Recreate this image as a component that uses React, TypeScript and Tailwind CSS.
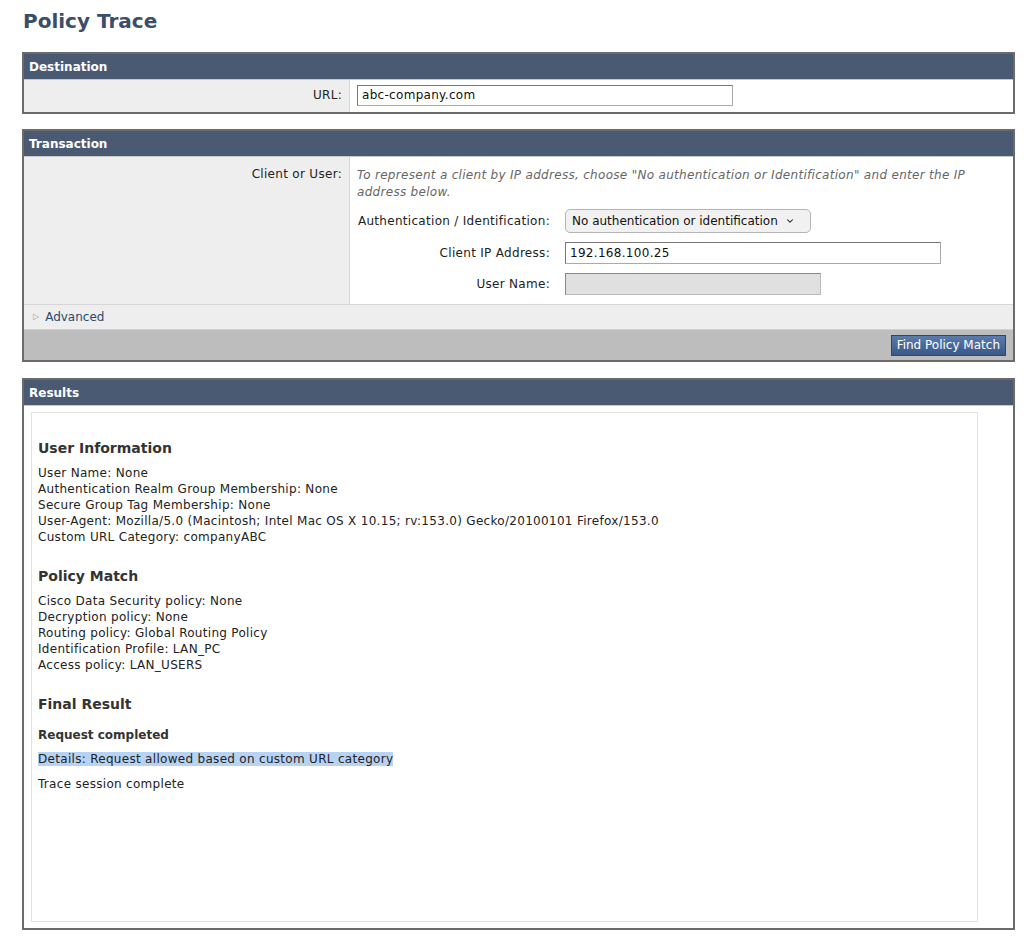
import { ChevronDown } from 'lucide-react';

const userInfo = [
  'User Name: None',
  'Authentication Realm Group Membership: None',
  'Secure Group Tag Membership: None',
  'User-Agent: Mozilla/5.0 (Macintosh; Intel Mac OS X 10.15; rv:153.0) Gecko/20100101 Firefox/153.0',
  'Custom URL Category: companyABC',
];

const policyMatch = [
  'Cisco Data Security policy: None',
  'Decryption policy: None',
  'Routing policy: Global Routing Policy',
  'Identification Profile: LAN_PC',
  'Access policy: LAN_USERS',
];

function PanelHeader({ title }: { title: string }) {
  return (
    <div className="h-[26px] bg-[#4a5a72] border-b border-[#c8c8c8] px-[5px] flex items-center text-white text-[12px] font-bold tracking-normal">
      {title}
    </div>
  );
}

export default function App() {
  return (
    <div className="min-h-[941px] bg-white font-['DejaVu_Sans',Verdana,sans-serif] text-[12px] tracking-[0.3px] text-[#222] px-[22px] pt-[9px]">
      <h1 className="text-[20px] font-bold text-[#3c4d68] leading-[24px] ml-[1px] tracking-normal">Policy Trace</h1>

      {/* Destination */}
      <div className="mt-[19px] w-[993px] border-2 border-[#6b6b6b]">
        <PanelHeader title="Destination" />
        <div className="flex h-[32px]">
          <div className="w-[326px] bg-[#eeeeee] border-r border-[#d6d6d6] flex justify-end pr-[7px] pt-[6px]">URL:</div>
          <div className="flex-1 bg-white pl-[7px] pt-[5px]">
            <div className="w-[376px] h-[21px] border border-[#aaa] border-t-[#777] border-l-[#777] pl-[4px] leading-[19px] text-[#111]">
              abc-company.com
            </div>
          </div>
        </div>
      </div>

      {/* Transaction */}
      <div className="mt-[15px] w-[993px] border-2 border-[#6b6b6b]">
        <PanelHeader title="Transaction" />
        <div className="flex h-[148px] border-b border-[#d6d6d6]">
          <div className="w-[326px] bg-[#eeeeee] border-r border-[#d6d6d6] flex justify-end pr-[7px] pt-[8px]">Client or User:</div>
          <div className="flex-1 bg-white pl-[7px] pt-[10px]">
            <p className="italic text-[#666] leading-[17px] w-[630px]">
              To represent a client by IP address, choose "No authentication or Identification" and enter the IP address below.
            </p>
            <div className="mt-[8px] grid grid-cols-[193px_1fr] gap-x-[15px] gap-y-[9px] items-center">
              <div className="text-right">Authentication / Identification:</div>
              <div>
                <div className="w-[246px] h-[24px] rounded-[5px] border border-[#b5b5b5] bg-[#f1f1f1] flex items-center px-[6px] text-[#111] tracking-normal">
                  <span>No authentication or identification</span>
                  <ChevronDown className="ml-[7px] w-[10px] h-[10px]" strokeWidth={2.5} />
                </div>
              </div>
              <div className="text-right">Client IP Address:</div>
              <div className="w-[376px] h-[22px] border border-[#aaa] border-t-[#777] border-l-[#777] pl-[4px] leading-[20px] text-[#111]">
                192.168.100.25
              </div>
              <div className="text-right">User Name:</div>
              <div className="w-[256px] h-[22px] border border-[#bbb] border-t-[#888] border-l-[#888] bg-[#e0e0e0]" />
            </div>
          </div>
        </div>
        <div className="h-[25px] bg-[#eeeeee] flex items-center pl-[9px] gap-[6px] text-[#2b4a6b] tracking-normal border-b border-[#d0d0d0]">
          <span className="text-[8px] text-[#999]">▷</span>
          <span>Advanced</span>
        </div>
        <div className="h-[30px] bg-[#bdbdbd] flex items-center justify-end pr-[7px]">
          <button className="h-[21px] px-[5px] bg-gradient-to-b from-[#5a7bab] to-[#3a5888] border border-[#2e4670] text-white text-[12px] leading-[19px] tracking-normal">
            Find Policy Match
          </button>
        </div>
      </div>

      {/* Results */}
      <div className="mt-[16px] w-[993px] border-2 border-[#6b6b6b]">
        <PanelHeader title="Results" />
        <div className="bg-white px-[7px] pt-[6px] pb-[6px]">
          <div className="w-[947px] h-[510px] border border-[#e2e2e2] pl-[6px] pt-[26px]">
            <h2 className="text-[14px] font-bold text-[#333] leading-[18px] tracking-normal">User Information</h2>
            <div className="mt-[8px] leading-[16px]">
              {userInfo.map((line) => (
                <div key={line}>{line}</div>
              ))}
            </div>
            <h2 className="mt-[22px] text-[14px] font-bold text-[#333] leading-[18px] tracking-normal">Policy Match</h2>
            <div className="mt-[8px] leading-[16px]">
              {policyMatch.map((line) => (
                <div key={line}>{line}</div>
              ))}
            </div>
            <h2 className="mt-[22px] text-[14px] font-bold text-[#333] leading-[18px] tracking-normal">Final Result</h2>
            <div className="mt-[14px] font-bold text-[#333] leading-[16px] tracking-normal">Request completed</div>
            <div className="mt-[8px] leading-[16px]">
              <span className="bg-[#b7d3f3]">Details: Request allowed based on custom URL category</span>
            </div>
            <div className="mt-[9px] leading-[16px]">Trace session complete</div>
          </div>
        </div>
      </div>
    </div>
  );
}
